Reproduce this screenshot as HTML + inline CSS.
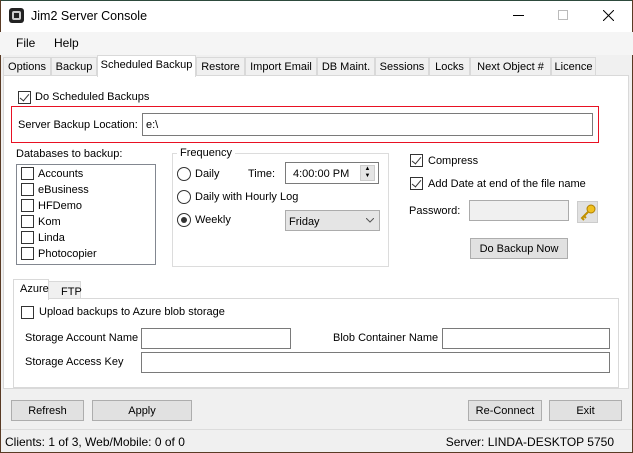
<!DOCTYPE html><html><head><style>
*{box-sizing:border-box;margin:0;padding:0}
body{width:633px;height:453px;position:relative;overflow:hidden;background:#f0f0f0;font-family:"Liberation Sans",sans-serif;font-size:11px;color:#000}
.a{position:absolute;white-space:nowrap}
.t{margin-top:1px}
.tb{background:#fff}
.tab{position:absolute;top:57px;height:19px;border:1px solid #d9d9d9;border-bottom:none;background:#f0f0f0;text-align:center;line-height:19px;white-space:nowrap}
.cb{position:absolute;width:13px;height:13px;border:1px solid #333;background:#fff}
.rd{position:absolute;width:14px;height:14px;border:1px solid #333;border-radius:50%;background:#fff}
.in{position:absolute;border:1px solid #7a7a7a;background:#fff}
.bt{position:absolute;border:1px solid #adadad;background:#e1e1e1;text-align:center;line-height:20px}
.ck::after{content:"";position:absolute;left:3px;top:0px;width:4px;height:8px;border:solid #333;border-width:0 1.5px 1.5px 0;transform:rotate(40deg)}
</style></head><body>
<div class="a tb" style="left:0;top:0;width:633px;height:32px"></div>
<div class="a" style="left:0;top:0;width:633px;height:1px;background:#2d4a3c"></div>
<div class="a" style="left:0;top:0;width:1px;height:453px;background:#5a3b25"></div>
<div class="a" style="right:0;top:0;width:1px;height:453px;background:#5a3b25"></div>
<div class="a" style="left:0;bottom:0;width:633px;height:1px;background:#5a3b25"></div>
<div class="a" style="left:9px;top:8px;width:15px;height:15px;background:#222;border-radius:3px"><div class="a" style="left:3px;top:3px;width:9px;height:9px;border:2px solid #ccc;border-radius:2px"></div></div>
<div class="a" style="left:31px;top:9px;font-size:12.5px">Jim2 Server Console</div>
<div class="a" style="left:513px;top:15px;width:11px;height:1px;background:#000"></div>
<div class="a" style="left:558px;top:10px;width:10px;height:10px;border:1px solid #bbb"></div>
<svg class="a" style="left:603px;top:10px" width="11" height="11"><path d="M0 0L11 11M11 0L0 11" stroke="#000" stroke-width="1"/></svg>
<div class="a" style="left:0;top:32px;width:633px;height:23px;background:#f5f5f5"></div>
<div class="a" style="left:16px;top:36px;font-size:12px">File</div>
<div class="a" style="left:54px;top:36px;font-size:12px">Help</div>
<div class="tab" style="left:3px;width:48px">Options</div>
<div class="tab" style="left:51px;width:46px">Backup</div>
<div class="tab" style="left:245px;width:72px">Import Email</div>
<div class="tab" style="left:196px;width:49px">Restore</div>
<div class="tab" style="left:317px;width:58px">DB Maint.</div>
<div class="tab" style="left:375px;width:54px">Sessions</div>
<div class="tab" style="left:429px;width:41px">Locks</div>
<div class="tab" style="left:470px;width:81px">Next Object #</div>
<div class="tab" style="left:551px;width:45px">Licence</div>
<div class="a" style="left:3px;top:75px;width:626px;height:314px;background:#fff;border:1px solid #d9d9d9"></div>
<div class="tab" style="left:97px;top:55px;width:99px;height:22px;background:#fff;line-height:19px">Scheduled Backup</div>
<div class="cb ck" style="left:18px;top:91px"></div>
<div class="a" style="left:35px;top:91px">Do Scheduled Backups</div>
<div class="a" style="left:11px;top:106px;width:588px;height:37px;border:1px solid #e81123"></div>
<div class="a" style="left:18px;top:119px">Server Backup Location:</div>
<div class="in" style="left:142px;top:113px;width:451px;height:23px"><span class="a" style="left:3px;top:5px">e:\</span></div>
<div class="a" style="left:16px;top:148px">Databases to backup:</div>
<div class="in" style="left:16px;top:164px;width:140px;height:101px;border-color:#828790"></div>
<div class="cb" style="left:21px;top:167px"></div><div class="a" style="left:38px;top:168px">Accounts</div>
<div class="cb" style="left:21px;top:183px"></div><div class="a" style="left:38px;top:184px">eBusiness</div>
<div class="cb" style="left:21px;top:199px"></div><div class="a" style="left:38px;top:200px">HFDemo</div>
<div class="cb" style="left:21px;top:215px"></div><div class="a" style="left:38px;top:216px">Kom</div>
<div class="cb" style="left:21px;top:231px"></div><div class="a" style="left:38px;top:232px">Linda</div>
<div class="cb" style="left:21px;top:247px"></div><div class="a" style="left:38px;top:248px">Photocopier</div>
<div class="a" style="left:172px;top:153px;width:217px;height:114px;border:1px solid #dcdcdc"></div>
<div class="a" style="left:177px;top:147px;background:#fff;padding:0 3px">Frequency</div>
<div class="rd" style="left:177px;top:167px"></div><div class="a" style="left:195px;top:168px">Daily</div>
<div class="a" style="left:248px;top:168px">Time:</div>
<div class="in" style="left:285px;top:162px;width:94px;height:22px"><span class="a" style="left:7px;top:5px">4:00:00 PM</span><div class="a" style="left:74px;top:2px;width:15px;height:16px;background:#e5e5e5;border:1px solid #ccc;font-size:6px;line-height:7px;text-align:center">▲<br>▼</div></div>
<div class="rd" style="left:177px;top:190px"></div><div class="a" style="left:195px;top:191px">Daily with Hourly Log</div>
<div class="rd" style="left:177px;top:213px"><div class="a" style="left:3px;top:3px;width:6px;height:6px;border-radius:50%;background:#333"></div></div><div class="a" style="left:195px;top:214px">Weekly</div>
<div class="a" style="left:285px;top:210px;width:95px;height:21px;background:#e5e5e5;border:1px solid #acacac"><span class="a" style="left:3px;top:5px">Friday</span><svg class="a" style="left:80px;top:7px" width="8" height="5"><path d="M0 0L4 4L8 0" stroke="#555" fill="none"/></svg></div>
<div class="cb ck" style="left:410px;top:154px"></div><div class="a" style="left:428px;top:155px">Compress</div>
<div class="cb ck" style="left:410px;top:177px"></div><div class="a" style="left:428px;top:178px">Add Date at end of the file name</div>
<div class="a" style="left:409px;top:205px">Password:</div>
<div class="in" style="left:469px;top:200px;width:100px;height:21px;background:#f0f0f0;border-color:#ababab"></div>
<div class="a" style="left:577px;top:201px;width:21px;height:22px;background:#e1e1e1;border:1px solid #ccc"><svg class="a" style="left:2px;top:2px" width="16" height="17"><circle cx="11" cy="5" r="4" fill="#f0c020" stroke="#b08000"/><path d="M8 8L2 14L4 16M4 12L6 14" stroke="#c09000" stroke-width="2" fill="none"/></svg></div>
<div class="bt" style="left:470px;top:238px;width:98px;height:21px">Do Backup Now</div>
<div class="a" style="left:48px;top:281px;width:33px;height:18px;background:#f0f0f0;border:1px solid #d9d9d9;border-bottom:none;padding:4px 0 0 12px">FTP</div>
<div class="a" style="left:13px;top:298px;width:606px;height:90px;border:1px solid #d9d9d9;background:#fff"></div>
<div class="a" style="left:13px;top:279px;width:36px;height:21px;background:#fff;border:1px solid #d9d9d9;border-bottom:none;padding:3px 0 0 6px">Azure</div>
<div class="cb" style="left:21px;top:306px"></div><div class="a" style="left:39px;top:306px">Upload backups to Azure blob storage</div>
<div class="a" style="left:25px;top:332px">Storage Account Name</div>
<div class="in" style="left:141px;top:328px;width:150px;height:21px"></div>
<div class="a" style="left:333px;top:332px">Blob Container Name</div>
<div class="in" style="left:442px;top:328px;width:168px;height:21px"></div>
<div class="a" style="left:25px;top:356px">Storage Access Key</div>
<div class="in" style="left:141px;top:352px;width:469px;height:21px"></div>
<div class="bt" style="left:11px;top:400px;width:73px;height:21px">Refresh</div>
<div class="bt" style="left:92px;top:400px;width:100px;height:21px">Apply</div>
<div class="bt" style="left:468px;top:400px;width:74px;height:21px">Re-Connect</div>
<div class="bt" style="left:549px;top:400px;width:73px;height:21px">Exit</div>
<div class="a" style="left:1px;top:429px;width:631px;height:1px;background:#dcdcdc"></div>
<div class="a" style="left:5px;top:435px;font-size:12px">Clients: 1 of 3, Web/Mobile: 0 of 0</div>
<div class="a" style="right:19px;top:435px;font-size:12px">Server: LINDA-DESKTOP 5750</div>
</body></html>
